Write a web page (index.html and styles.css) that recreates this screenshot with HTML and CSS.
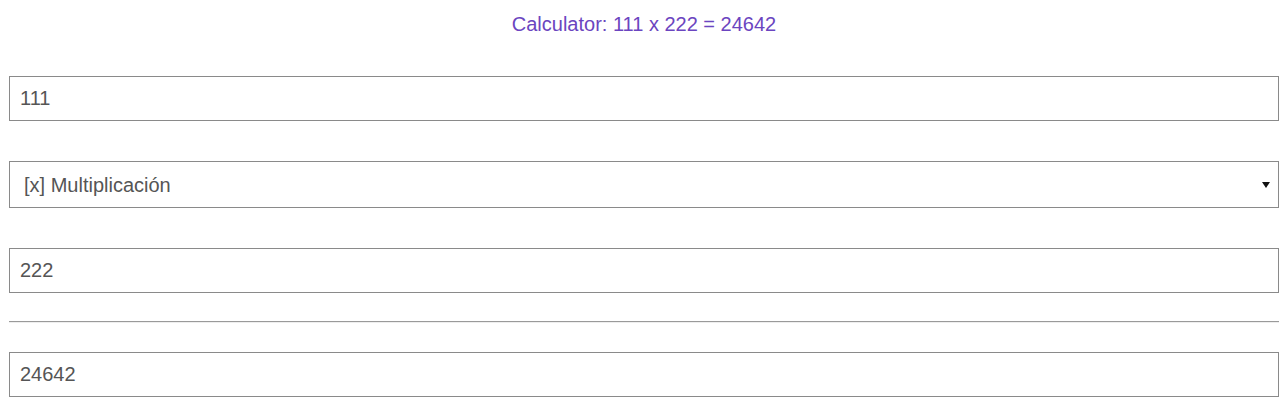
FILE: index.html
```html
<!DOCTYPE html>
<html>
<head>
<meta charset="utf-8">
<link rel="stylesheet" href="styles.css">
</head>
<body>
<div class="calc">
  <h1 class="title">Calculator: 111 x 222 = 24642</h1>
  <input class="field" type="text" value="111">
  <select class="field select">
    <option>[x] Multiplicación</option>
  </select>
  <input class="field" type="text" value="222">
  <hr class="rule">
  <input class="field" type="text" value="24642">
</div>
</body>
</html>
```

FILE: styles.css
```css
html, body {
  margin: 0;
  padding: 0;
  background: #fff;
}
.calc {
  display: flex;
  flex-direction: column;
  padding: 0 6px 0 9px;
  font-family: "Liberation Sans", Arial, sans-serif;
}
.title {
  margin: 11px 0 0 0;
  height: 26px;
  line-height: 26px;
  font-size: 20px;
  font-weight: normal;
  text-align: center;
  color: #6b45c0;
}
.field {
  box-sizing: border-box;
  width: 100%;
  height: 45px;
  margin: 39px 0 0 0;
  padding: 0 10px;
  border: 1px solid #8a8a8a;
  border-radius: 0;
  background: #fff;
  font-family: "Liberation Sans", Arial, sans-serif;
  font-size: 20px;
  color: #555;
  outline: none;
}
.select {
  height: 47px;
  margin-top: 40px;
  padding: 0 8px 0 14px;
  -webkit-appearance: none;
  appearance: none;
  background-image: url("data:image/svg+xml;utf8,<svg xmlns='http://www.w3.org/2000/svg' width='8' height='6'><path d='M0 0h8L4 6z' fill='%23111'/></svg>");
  background-repeat: no-repeat;
  background-position: right 8px center;
}
.select + .field {
  margin-top: 40px;
}
.rule {
  width: 100%;
  box-sizing: border-box;
  margin: 28px 0 0 0;
  height: 0;
  border: 0;
  border-top: 1px solid #9a9a9a;
  border-bottom: 1px solid #eee;
}
.rule + .field {
  margin-top: 29px;
}
```
